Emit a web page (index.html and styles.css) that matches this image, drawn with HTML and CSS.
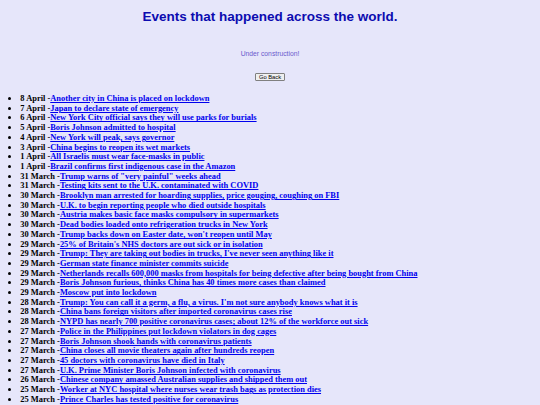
FILE: index.html
```html
<!DOCTYPE html>
<html lang="en">
<head>
<meta charset="utf-8">
<title>Events</title>
<link rel="stylesheet" href="styles.css">
</head>
<body>
<h1 class="title">Events that happened across the world.</h1>
<p class="note">Under construction!</p>
<div class="actions"><button class="back" type="button">Go Back</button></div>
<ul class="events">
<li>8 April -<a href="#">Another city in China is placed on lockdown</a></li>
<li>7 April -<a href="#">Japan to declare state of emergency</a></li>
<li>6 April -<a href="#">New York City official says they will use parks for burials</a></li>
<li>5 April -<a href="#">Boris Johnson admitted to hospital</a></li>
<li>4 April -<a href="#">New York will peak, says governor</a></li>
<li>3 April -<a href="#">China begins to reopen its wet markets</a></li>
<li>1 April -<a href="#">All Israelis must wear face-masks in public</a></li>
<li>1 April -<a href="#">Brazil confirms first indigenous case in the Amazon</a></li>
<li>31 March -<a href="#">Trump warns of "very painful" weeks ahead</a></li>
<li>31 March -<a href="#">Testing kits sent to the U.K. contaminated with COVID</a></li>
<li>30 March -<a href="#">Brooklyn man arrested for hoarding supplies, price gouging, coughing on FBI</a></li>
<li>30 March -<a href="#">U.K. to begin reporting people who died outside hospitals</a></li>
<li>30 March -<a href="#">Austria makes basic face masks compulsory in supermarkets</a></li>
<li>30 March -<a href="#">Dead bodies loaded onto refrigeration trucks in New York</a></li>
<li>30 March -<a href="#">Trump backs down on Easter date, won't reopen until May</a></li>
<li>29 March -<a href="#">25% of Britain's NHS doctors are out sick or in isolation</a></li>
<li>29 March -<a href="#">Trump: They are taking out bodies in trucks, I've never seen anything like it</a></li>
<li>29 March -<a href="#">German state finance minister commits suicide</a></li>
<li>29 March -<a href="#">Netherlands recalls 600,000 masks from hospitals for being defective after being bought from China</a></li>
<li>29 March -<a href="#">Boris Johnson furious, thinks China has 40 times more cases than claimed</a></li>
<li>29 March -<a href="#">Moscow put into lockdown</a></li>
<li>28 March -<a href="#">Trump: You can call it a germ, a flu, a virus. I'm not sure anybody knows what it is</a></li>
<li>28 March -<a href="#">China bans foreign visitors after imported coronavirus cases rise</a></li>
<li>28 March -<a href="#">NYPD has nearly 700 positive coronavirus cases; about 12% of the workforce out sick</a></li>
<li>27 March -<a href="#">Police in the Philippines put lockdown violators in dog cages</a></li>
<li>27 March -<a href="#">Boris Johnson shook hands with coronavirus patients</a></li>
<li>27 March -<a href="#">China closes all movie theaters again after hundreds reopen</a></li>
<li>27 March -<a href="#">45 doctors with coronavirus have died in Italy</a></li>
<li>27 March -<a href="#">U.K. Prime Minister Boris Johnson infected with coronavirus</a></li>
<li>26 March -<a href="#">Chinese company amassed Australian supplies and shipped them out</a></li>
<li>25 March -<a href="#">Worker at NYC hospital where nurses wear trash bags as protection dies</a></li>
<li>25 March -<a href="#">Prince Charles has tested positive for coronavirus</a></li>
</ul>
</body>
</html>
```

FILE: styles.css
```css
html {
  background: #e6e6fa;
}

body {
  margin: 0;
  padding: 0 3.4px;
  font-family: "Liberation Serif", "Times New Roman", serif;
  color: #000;
}

.title {
  margin: 9px 0 0;
  text-align: center;
  font-family: "Liberation Sans", Arial, sans-serif;
  font-size: 13.5px;
  font-weight: bold;
  line-height: 15.5px;
  color: #0c0cb0;
}

.note {
  margin: 25px 0 0;
  text-align: center;
  font-family: "Liberation Sans", Arial, sans-serif;
  font-size: 6.75px;
  line-height: 7.8px;
  color: #6a5acd;
}

.actions {
  margin-top: 15.3px;
  display: flex;
  justify-content: center;
}

.back {
  box-sizing: border-box;
  height: 8.9px;
  margin: 0;
  padding: 0 2.7px;
  font-family: "Liberation Sans", Arial, sans-serif;
  font-size: 5.8px;
  line-height: 6.5px;
  color: #000;
  background: #efefef;
  border: 0.8px solid #808080;
  border-radius: 1px;
}

.events {
  margin: 12.5px 0 0;
  padding-left: 16.9px;
  font-size: 8.44px;
  font-weight: bold;
  line-height: 9.703px;
}

.events a {
  color: #0000ee;
  text-decoration: underline;
}
```
